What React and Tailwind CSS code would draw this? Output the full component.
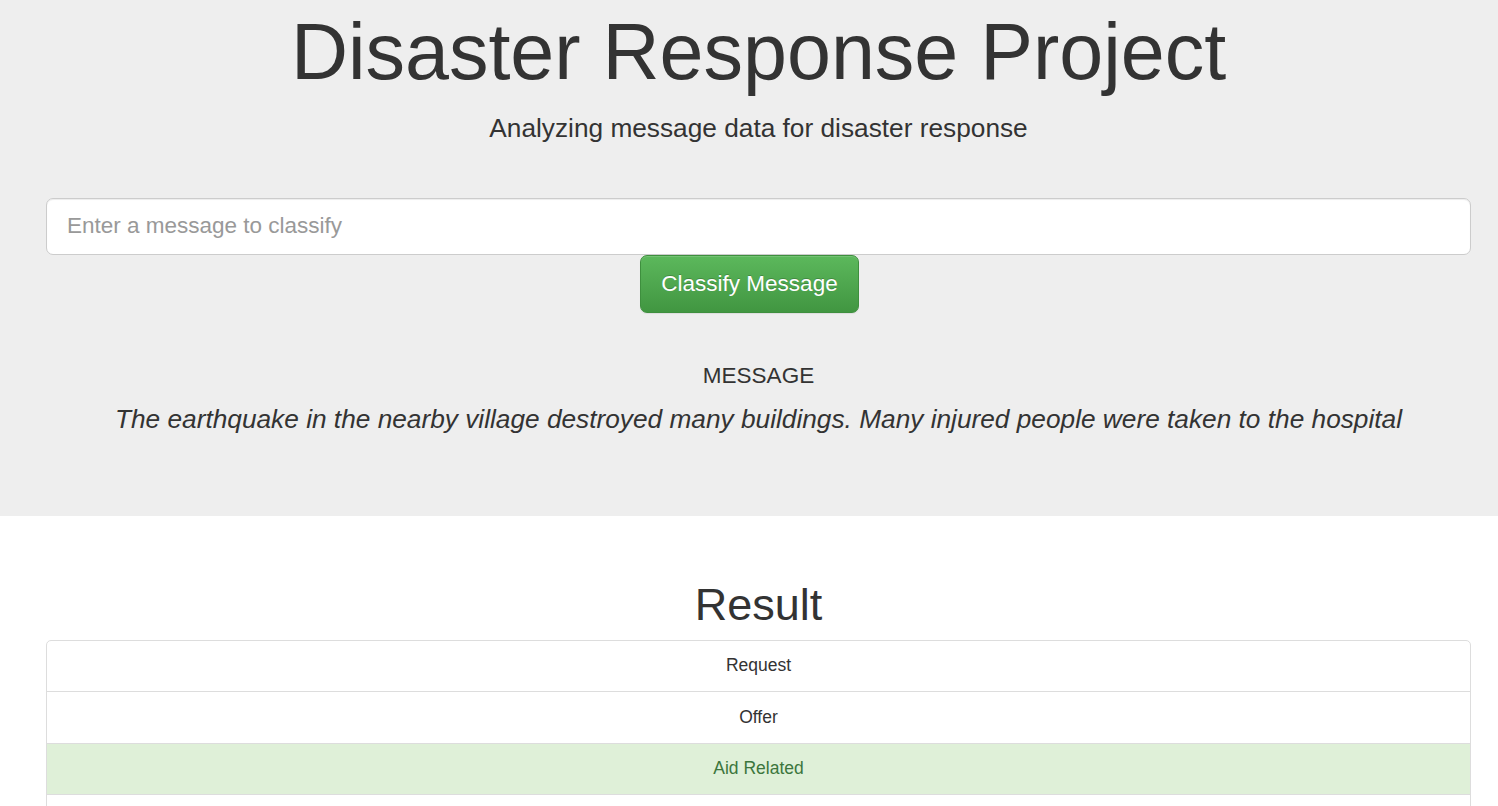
const categories = [
  { name: "Request", hit: false },
  { name: "Offer", hit: false },
  { name: "Aid Related", hit: true },
  { name: "Medical Help", hit: false },
  { name: "Medical Products", hit: false },
  { name: "Search And Rescue", hit: false },
];

function App() {
  return (
    <div className="min-h-[806px] bg-white text-[#333333] font-['Liberation_Sans',Arial,sans-serif]">
      {/* Jumbotron */}
      <div className="h-[516px] bg-[#eeeeee] pl-[46px] pr-[27px] pt-[9px]">
        <h1 className="text-center text-[79px] leading-[1.1] font-normal">
          Disaster Response Project
        </h1>
        <p className="mt-[14px] text-center text-[26.25px] leading-[1.4]">
          Analyzing message data for disaster response
        </p>

        <form className="mt-[51px] flex flex-col items-center" onSubmit={(e) => e.preventDefault()}>
          <input
            type="text"
            placeholder="Enter a message to classify"
            className="h-[57px] w-full rounded-[7px] border border-[#cccccc] bg-white px-[20px] text-[22.5px] text-[#555555] placeholder:text-[#999999] shadow-[inset_0_1px_1px_rgba(0,0,0,0.075)] outline-none"
          />
          <button
            type="submit"
            className="mr-[18px] h-[58px] rounded-[7px] border border-[#3e8f3e] bg-linear-to-b from-[#5cb85c] to-[#419641] px-[20px] text-[22.5px] text-white [text-shadow:0_-1px_0_rgba(0,0,0,0.2)] shadow-[inset_0_1px_0_rgba(255,255,255,0.15),0_1px_1px_rgba(0,0,0,0.075)]"
          >
            Classify Message
          </button>
        </form>

        <div className="mt-[51px] text-center">
          <h4 className="text-[22.5px] leading-[1.1]">MESSAGE</h4>
          <p className="mt-[13px] text-[26.25px] leading-[1.4] italic">
            The earthquake in the nearby village destroyed many buildings. Many injured people were taken to the hospital
          </p>
        </div>
      </div>

      {/* Result */}
      <div className="pl-[46px] pr-[27px] pt-[64px]">
        <h1 className="text-center text-[45px] leading-[1.1] font-normal">Result</h1>
        <ul className="mt-[10px] rounded-[5px] border border-[#dddddd] divide-y divide-[#dddddd] text-[17.5px]">
          {categories.map((c) => (
            <li
              key={c.name}
              className={
                c.hit
                  ? "bg-[#dff0d8] py-[12.5px] text-center leading-[25.5px] text-[#3c763d]"
                  : "py-[12.5px] text-center leading-[25.5px]"
              }
            >
              {c.name}
            </li>
          ))}
        </ul>
      </div>
    </div>
  );
}

export default App;
